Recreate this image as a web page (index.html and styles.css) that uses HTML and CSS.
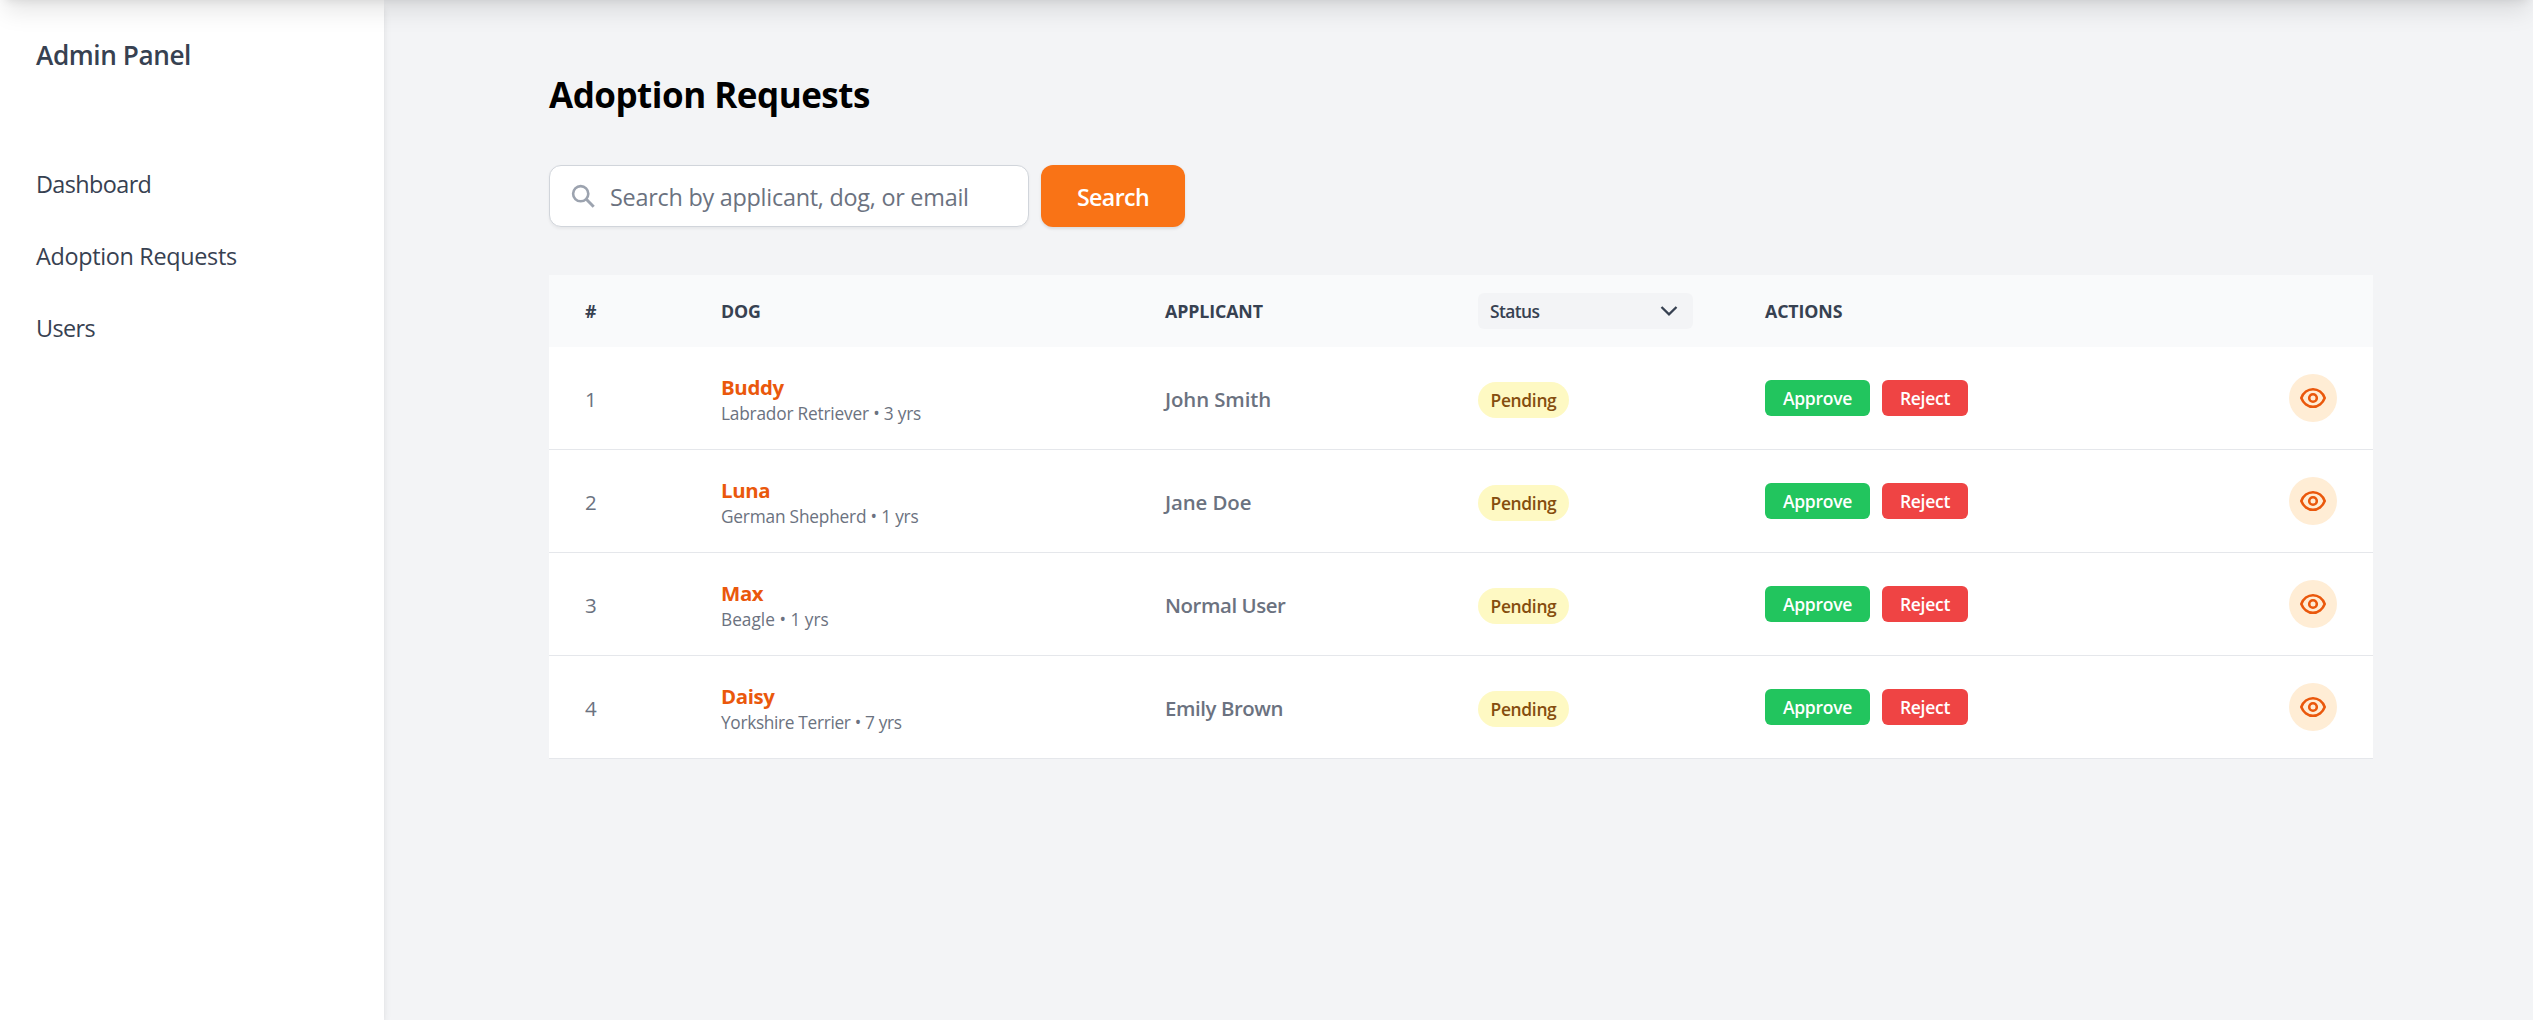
FILE: index.html
```html
<!DOCTYPE html>
<html lang="en">
<head>
<meta charset="utf-8">
<title>Adoption Requests</title>
<link rel="stylesheet" href="styles.css">
</head>
<body>
<svg class="sprite" aria-hidden="true">
  <symbol id="eye" viewBox="0 0 28 28" fill="none" stroke="currentColor" stroke-width="2.6" stroke-linejoin="round">
    <circle cx="14" cy="14" r="3.8"/>
    <path d="M2.3 14C4.3 8.7 8.9 5.2 14 5.2S23.7 8.7 25.7 14C23.7 19.3 19.1 22.8 14 22.8S4.3 19.3 2.3 14Z"/>
  </symbol>
</svg>
<div class="topbar"></div>
<div class="layout">
  <aside class="sidebar">
    <h2 class="brand">Admin Panel</h2>
    <nav class="nav">
      <a class="nav-link">Dashboard</a>
      <a class="nav-link wide">Adoption Requests</a>
      <a class="nav-link">Users</a>
    </nav>
  </aside>
  <main class="main">
    <h1 class="title">Adoption Requests</h1>
    <form class="search">
      <label class="search-box">
        <svg class="search-icon" viewBox="0 0 30 30" fill="none" stroke="currentColor"><circle cx="11.7" cy="12.7" r="7.6" stroke-width="2.6"/><path d="M17.3 18.3 24.7 25.7" stroke-width="3"/></svg>
        <input class="search-input" type="text" placeholder="Search by applicant, dog, or email">
      </label>
      <button class="search-btn" type="button">Search</button>
    </form>
    <table class="table">
      <colgroup><col class="c-num"><col class="c-dog"><col class="c-app"><col class="c-status"><col class="c-act"><col class="c-view"></colgroup>
      <thead>
        <tr>
          <th>#</th><th>DOG</th><th>APPLICANT</th>
          <th class="status-cell"><div class="select"><span>Status</span><svg class="chevron" viewBox="0 0 18 12" fill="none" stroke="currentColor" stroke-width="2.3"><path d="M1.5 2 9 9.3 16.5 2"/></svg></div></th>
          <th>ACTIONS</th><th></th>
        </tr>
      </thead>
      <tbody>
        <tr>
          <td class="num">1</td><td><div class="dog">Buddy</div><div class="breed">Labrador Retriever • 3 yrs</div></td><td class="applicant">John Smith</td>
          <td class="status-cell"><span class="pill">Pending</span></td>
          <td><div class="actions"><button class="btn approve">Approve</button><button class="btn reject">Reject</button></div></td>
          <td><button class="view"><svg class="eye"><use href="#eye"/></svg></button></td>
        </tr>
        <tr>
          <td class="num">2</td><td><div class="dog">Luna</div><div class="breed">German Shepherd • 1 yrs</div></td><td class="applicant">Jane Doe</td>
          <td class="status-cell"><span class="pill">Pending</span></td>
          <td><div class="actions"><button class="btn approve">Approve</button><button class="btn reject">Reject</button></div></td>
          <td><button class="view"><svg class="eye"><use href="#eye"/></svg></button></td>
        </tr>
        <tr>
          <td class="num">3</td><td><div class="dog">Max</div><div class="breed short">Beagle • 1 yrs</div></td><td class="applicant snug">Normal User</td>
          <td class="status-cell"><span class="pill">Pending</span></td>
          <td><div class="actions"><button class="btn approve">Approve</button><button class="btn reject">Reject</button></div></td>
          <td><button class="view"><svg class="eye"><use href="#eye"/></svg></button></td>
        </tr>
        <tr>
          <td class="num">4</td><td><div class="dog">Daisy</div><div class="breed yorkie">Yorkshire Terrier • 7 yrs</div></td><td class="applicant snug">Emily Brown</td>
          <td class="status-cell"><span class="pill">Pending</span></td>
          <td><div class="actions"><button class="btn approve">Approve</button><button class="btn reject">Reject</button></div></td>
          <td><button class="view"><svg class="eye"><use href="#eye"/></svg></button></td>
        </tr>
      </tbody>
    </table>
  </main>
</div>
</body>
</html>
```
FILE: styles.css
```css
*, *::before, *::after { box-sizing: border-box; }
body { margin: 0; background: #f3f4f6; color: #000; font-family: "Open Sans", "Noto Sans", sans-serif; overflow: hidden; }
h1, h2 { margin: 0; }
button, input { font: inherit; letter-spacing: inherit; border: 0; margin: 0; padding: 0; }
svg { display: block; }
.sprite { position: absolute; width: 0; height: 0; }

/* Navigation bar parked above the viewport; only its shadow shows */
.topbar { position: absolute; top: -96px; left: 0; right: 0; height: 96px; background: #fff; z-index: 2; pointer-events: none;
  box-shadow: 0 15px 22.5px -4.5px rgba(0,0,0,.1), 0 6px 9px -6px rgba(0,0,0,.1); }

.layout { display: flex; height: 1020px; }
.sidebar { flex: none; width: 384px; background: #fff; padding: 34px 36px;
  box-shadow: 0 6px 9px -1.5px rgba(0,0,0,.1), 0 3px 6px -3px rgba(0,0,0,.1); }
.brand { font-size: 26.2px; font-weight: 600; line-height: 42px; letter-spacing: -.43px; color: #374151; }
.nav { display: flex; flex-direction: column; gap: 36px; margin-top: 90px; }
.nav-link { font-size: 23.4px; line-height: 36px; letter-spacing: -.6px; color: #374151; }
.nav-link.wide { letter-spacing: -.32px; }

.main { flex: 1; padding: 71px 160px 0 165px; }
.title { font-size: 35px; font-weight: 700; line-height: 48px; letter-spacing: -.5px; }

.search { display: flex; gap: 12px; margin-top: 46px; height: 62px; }
.search-box { display: flex; align-items: center; width: 480px; padding: 0 18px 0 19px; background: #fff; border: 1px solid #d1d5db; border-radius: 12px; box-shadow: 0 1.5px 3px rgba(0,0,0,.05); }
.search-icon { flex: none; width: 30px; height: 30px; color: #9ca3af; }
.search-input { flex: 1; min-width: 0; margin-left: 11px; padding-top: 2px; background: none; font-size: 23.4px; line-height: 36px; letter-spacing: -.25px; outline: none; }
.search-input::placeholder { color: #6b7280; opacity: 1; }
.search-btn { width: 144px; padding-top: 2px; background: #f97316; color: #fff; font-size: 23.2px; font-weight: 600; letter-spacing: -.6px; border-radius: 12px; box-shadow: 0 1.5px 3px rgba(0,0,0,.1); }

.table { width: 1824px; margin-top: 48px; table-layout: fixed; border-collapse: separate; border-spacing: 0; background: #fff; color: #6b7280; }
.c-num { width: 136px; }
.c-dog { width: 444px; }
.c-app { width: 313px; }
.c-status { width: 287px; }
.c-act { width: 524px; }
.c-view { width: 120px; }
th { height: 72px; padding: 0 36px; background: #f9fafb; color: #374151; font-size: 17.8px; font-weight: 700; line-height: 24px; letter-spacing: -.12px; text-align: left; }
td { height: 103px; padding: 0 36px; border-bottom: 1px solid #e5e7eb; font-size: 21px; line-height: 30px; vertical-align: middle; }
.select { display: flex; align-items: center; justify-content: space-between; width: 215px; height: 36px; padding: 0 15px 0 12px; border-radius: 6px; background: #f3f4f6; font-size: 17.4px; font-weight: 600; letter-spacing: -.6px; }
.chevron { width: 18px; height: 12px; }
.num { font-size: 20.5px; padding-top: 2px; }
.dog { margin-top: 2px; color: #ea580c; font-size: 20.4px; font-weight: 700; line-height: 28px; letter-spacing: -.35px; }
.breed { margin: 1px 0 -1px; font-size: 17.3px; line-height: 24px; letter-spacing: -.2px; }
.breed.short { letter-spacing: 0; }
.breed.yorkie { letter-spacing: -.33px; }
.applicant { font-size: 20.4px; font-weight: 600; letter-spacing: -.1px; padding-top: 2px; }
.applicant.snug { letter-spacing: -.42px; }
.pill { display: flex; align-items: center; justify-content: center; width: 91px; height: 36px; margin-top: 4px; border-radius: 18px; background: #fef9c3; color: #854d0e; font-size: 17.4px; font-weight: 600; letter-spacing: -.32px; }
.actions { display: flex; gap: 12px; }
.btn { height: 36px; border-radius: 6px; color: #fff; font-size: 17.5px; font-weight: 600; letter-spacing: -.27px; }
.approve { width: 105px; background: #22c55e; }
.reject { width: 86px; background: #ef4444; }
.view { display: flex; align-items: center; justify-content: center; width: 48px; height: 48px; border-radius: 50%; background: #ffedd5; color: #ea580c; }
.eye { width: 28px; height: 28px; }
```
